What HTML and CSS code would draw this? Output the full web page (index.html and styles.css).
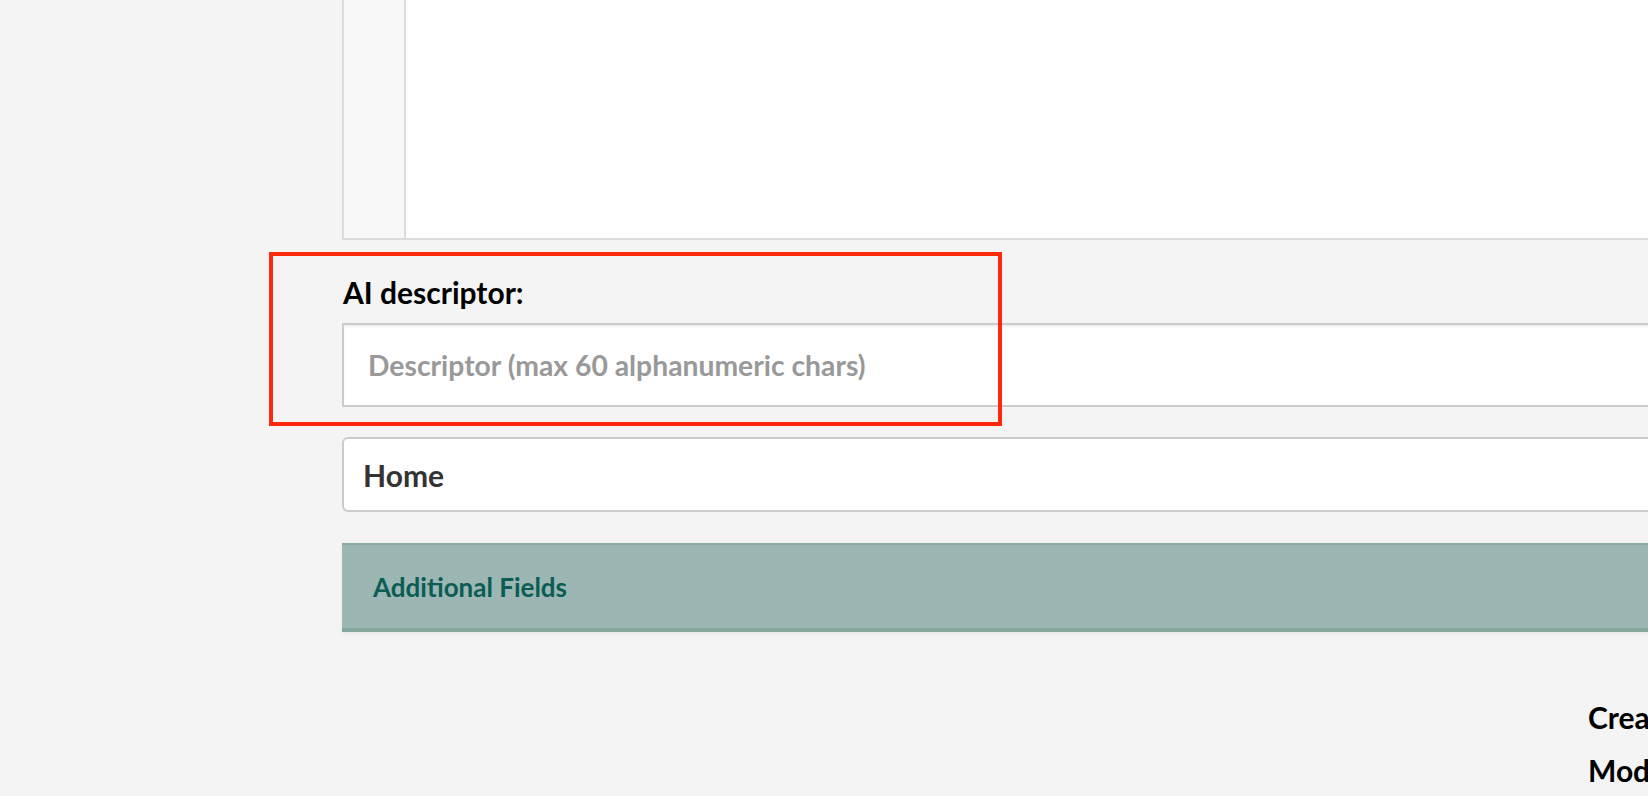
FILE: index.html
```html
<!DOCTYPE html>
<html lang="en">
<head>
<meta charset="utf-8">
<title>AI descriptor</title>
<link rel="stylesheet" href="styles.css">
</head>
<body>
<div class="page">
  <div class="editor">
    <div class="editor-gutter"></div>
    <div class="editor-content"></div>
  </div>

  <div class="field">
    <label class="field-label" for="descriptor">AI descriptor:</label>
    <input class="field-input" id="descriptor" type="text" placeholder="Descriptor (max 60 alphanumeric chars)">
  </div>

  <div class="select-box">Home</div>

  <div class="panel">
    <span class="panel-title">Additional Fields</span>
  </div>

  <div class="meta">
    <div class="meta-row">Created:</div>
    <div class="meta-row">Modified:</div>
  </div>
</div>
<div class="highlight"></div>
</body>
</html>
```

FILE: styles.css
```css
html, body {
  margin: 0;
  padding: 0;
  overflow: hidden;
  height: 796px;
}

body {
  background: #f4f4f4;
  font-family: "Lato", "Liberation Sans", sans-serif;
  position: relative;
}

.page {
  margin-left: 342px;
  width: 1500px;
  display: flex;
  flex-direction: column;
}

.editor {
  display: flex;
  height: 238px;
  border: 2px solid #dcdcdc;
  border-top: none;
  background: #ffffff;
}

.editor-gutter {
  width: 60px;
  background: #f8f8f8;
  border-right: 2px solid #dcdcdc;
}

.editor-content {
  flex: 1;
  background: #fefefe;
}

.field {
  display: flex;
  flex-direction: column;
  margin-top: 34px;
}

.field-label {
  font-size: 30px;
  line-height: 36px;
  font-weight: 700;
  color: #000;
  padding-left: 1px;
}

.field-input {
  margin-top: 13px;
  box-sizing: border-box;
  height: 84px;
  width: 100%;
  border: 2px solid #cccccc;
  border-radius: 0;
  background: #ffffff;
  box-shadow: inset 0 2px 2px rgba(0, 0, 0, 0.06);
  padding: 0 24px;
  font-family: "Lato", "Liberation Sans", sans-serif;
  font-size: 28.3px;
  font-weight: 700;
  color: #333;
  outline: none;
}

.field-input::placeholder {
  color: #999999;
  opacity: 1;
}

.select-box {
  margin-top: 30px;
  box-sizing: border-box;
  height: 75px;
  border: 2px solid #cccccc;
  border-radius: 6px;
  background: #ffffff;
  display: flex;
  align-items: center;
  padding-left: 19px;
  font-size: 30px;
  font-weight: 700;
  color: #333333;
}

.panel {
  margin-top: 31px;
  box-sizing: border-box;
  height: 89px;
  background: #9cb6b4;
  border-top: 2px solid #88a9a2;
  border-bottom: 4px solid #86a79e;
  box-shadow: 0 2px 3px rgba(0, 0, 0, 0.05);
  padding: 27px 0 0 31px;
}

.panel-title {
  font-size: 26px;
  line-height: 31px;
  font-weight: 700;
  color: #0b5d54;
}

.meta {
  margin-top: 59px;
  margin-left: 1246px;
  display: flex;
  flex-direction: column;
}

.meta-row {
  font-size: 30px;
  line-height: 53px;
  font-weight: 700;
  color: #000;
  white-space: nowrap;
}

.highlight {
  position: absolute;
  left: 269px;
  top: 252px;
  width: 733px;
  height: 174px;
  box-sizing: border-box;
  border: 4px solid #ff2a0c;
  pointer-events: none;
}
```
